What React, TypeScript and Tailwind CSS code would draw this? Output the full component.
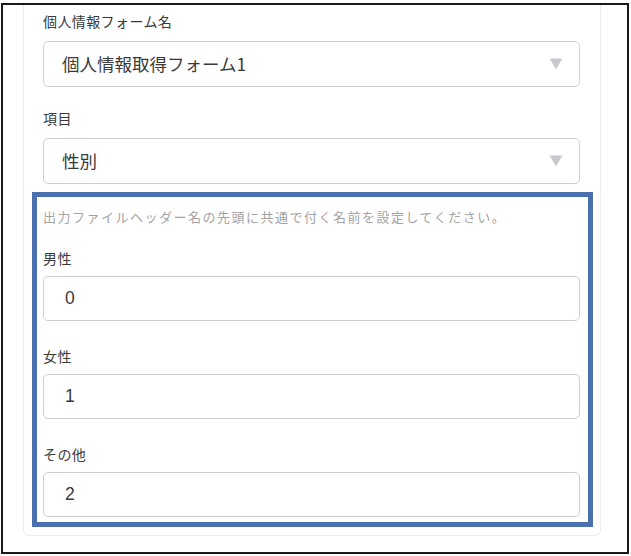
const FONT = "font-['Noto_Sans_CJK_JP','Noto_Sans',sans-serif]";

type Field = { label: string; value: string };

const prefixes: Field[] = [
  { label: "男性", value: "0" },
  { label: "女性", value: "1" },
  { label: "その他", value: "2" },
];

function Caret() {
  return (
    <svg width="14" height="12" viewBox="0 0 14 12" className="shrink-0">
      <path d="M0.5 0.5 H13.5 L7 11.5 Z" fill="#c9c9cd" />
    </svg>
  );
}

function SelectBox({ value }: { value: string }) {
  return (
    <div className="flex h-[46px] items-center justify-between rounded-[5px] border border-[#cfcfcf] bg-white pl-[18px] pr-[16px]">
      <span className="text-[17.5px] leading-none text-[#3a3a3a]">{value}</span>
      <Caret />
    </div>
  );
}

function TextBox({ value }: { value: string }) {
  return (
    <div className="flex h-[45px] items-center rounded-[5px] border border-[#cfcfcf] bg-white pl-[21px]">
      <span className="font-['Liberation_Sans',sans-serif] text-[17.5px] leading-none text-[#3a3a3a]">
        {value}
      </span>
    </div>
  );
}

function Label({ children }: { children: string }) {
  return <div className="h-[20px] text-[14px] leading-[20px] tracking-[0.4px] text-[#3a3a3a]">{children}</div>;
}

export default function App() {
  return (
    <div className={`h-[556px] w-[631px] overflow-hidden bg-white pt-[3px] pl-[1px] ${FONT}`}>
      <div className="h-[551px] w-[628px] border-2 border-[#1a1a1a] bg-white">
        <div className="ml-[20px] w-[578px] rounded-b-[6px] border-x border-b border-[#ececef] pb-[8px] pl-[19px] pr-[20px] pt-[6px]">
          <Label>個人情報フォーム名</Label>
          <div className="mt-[10px]">
            <SelectBox value="個人情報取得フォーム1" />
          </div>
          <div className="mt-[21px]">
            <Label>項目</Label>
          </div>
          <div className="mt-[10px]">
            <SelectBox value="性別" />
          </div>

          <div className="-ml-[11px] -mr-[13px] mt-[8px] border-[5px] border-[#4a70ae] pb-[5px] pl-[6px] pr-[8px] pt-[10px]">
            <div className="h-[20px] text-[13px] leading-[20px] tracking-[1.5px] text-[#a3a3a3]">
              出力ファイルヘッダー名の先頭に共通で付く名前を設定してください。
            </div>
            {prefixes.map((f, idx) => (
              <div key={f.label} className={idx === 0 ? "mt-[21px]" : "mt-[25px]"}>
                <Label>{f.label}</Label>
                <div className="mt-[8px]">
                  <TextBox value={f.value} />
                </div>
              </div>
            ))}
          </div>
        </div>
      </div>
    </div>
  );
}
